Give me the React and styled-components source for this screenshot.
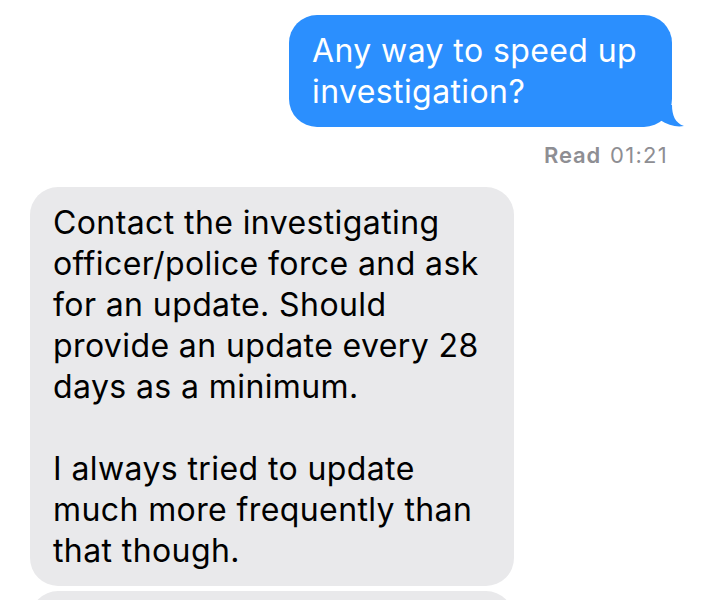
import React from "react";
import styled, { createGlobalStyle } from "styled-components";

const GlobalStyle = createGlobalStyle`
  body {
    margin: 0;
    background: #ffffff;
    font-family: Inter, "Liberation Sans", Arial, sans-serif;
  }
`;

const Thread = styled.div`
  display: flex;
  flex-direction: column;
  width: 701px;
  height: 600px;
  overflow: hidden;
  padding: 15px 29px 0 30px;
  box-sizing: border-box;
`;

const Row = styled.div`
  display: flex;
  justify-content: ${p => (p.$sent ? "flex-end" : "flex-start")};
  margin-top: ${p => p.$gap || 0}px;
`;

const Bubble = styled.div`
  position: relative;
  box-sizing: border-box;
  width: ${p => p.$width}px;
  padding: 15px 20px 15px 23px;
  border-radius: 28px;
  font-size: 32px;
  line-height: 41px;
  letter-spacing: 0.4px;
  white-space: nowrap;
  background: ${p => (p.$sent ? "#2b8ffe" : "#e9e9eb")};
  color: ${p => (p.$sent ? "#ffffff" : "#000000")};
`;

const Tail = styled.svg`
  position: absolute;
  right: -12px;
  bottom: 0;
  width: 24px;
  height: 22px;
`;

const Receipt = styled.div`
  display: flex;
  justify-content: flex-end;
  gap: 9px;
  margin-top: 16px;
  padding-right: 4px;
  font-size: 22px;
  line-height: 24px;
  letter-spacing: 1.3px;
  color: #8e8e93;
`;

const ReceiptLabel = styled.span`
  font-weight: 600;
  letter-spacing: 0.8px;
`;

const Gap = styled.div`
  height: 41px;
`;

const App = () => (
  <>
    <GlobalStyle />
    <Thread>
      <Row $sent>
        <Bubble $sent $width={383}>
          Any way to speed up
          <br />
          investigation?
          <Tail viewBox="0 0 24 22">
            <path d="M0 0 L12 0 C12 10 15 18 24 21 C17 22.5 8 20.5 0 15 Z" fill="#2b8ffe" />
          </Tail>
        </Bubble>
      </Row>
      <Receipt>
        <ReceiptLabel>Read</ReceiptLabel>
        <span>01:21</span>
      </Receipt>
      <Row $gap={20}>
        <Bubble $width={484}>
          Contact the investigating
          <br />
          officer/police force and ask
          <br />
          for an update. Should
          <br />
          provide an update every 28
          <br />
          days as a minimum.
          <Gap />
          I always tried to update
          <br />
          much more frequently than
          <br />
          that though.
        </Bubble>
      </Row>
      <Row $gap={5}>
        <Bubble $width={484}>&nbsp;</Bubble>
      </Row>
    </Thread>
  </>
);

export default App;
